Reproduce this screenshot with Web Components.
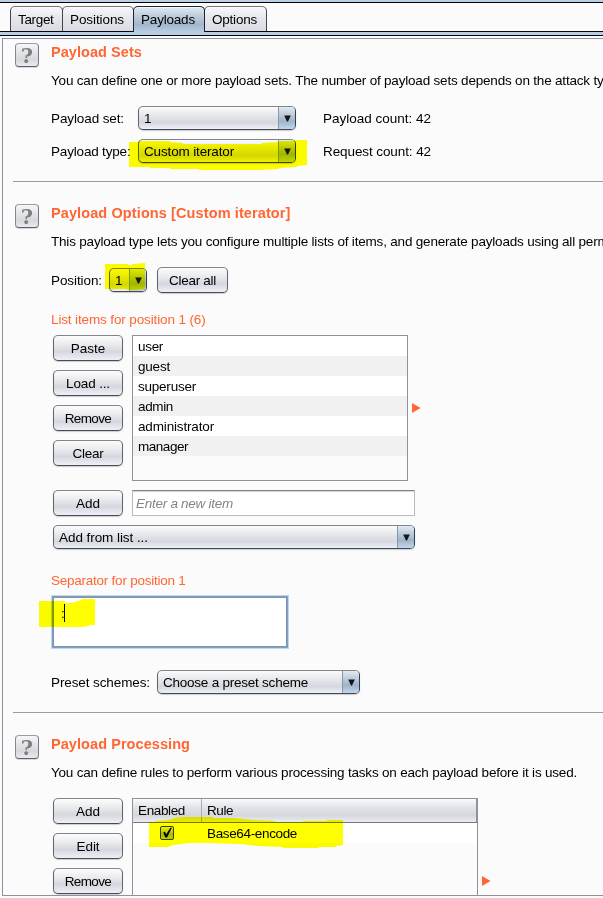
<!DOCTYPE html>
<html lang="en">
<head>
<meta charset="utf-8">
<title>Payloads</title>
<style>
html, body { margin: 0; height: 898px; overflow: hidden; background: #fbfbfb; }
body { font: 13.5px/20px "Liberation Sans", Arial, sans-serif; color: #000; }
</style>
</head>
<body>
<payload-page></payload-page>
<script>
function define(name, html, setup) {
  const template = document.createElement('template');
  template.innerHTML = html;
  customElements.define(name, class extends HTMLElement {
    connectedCallback() {
      if (this.shadowRoot) return;
      this.attachShadow({ mode: 'open' }).append(template.content.cloneNode(true));
      if (setup) setup(this, this.shadowRoot);
    }
  });
}

/* One line of text; w is the tracked width of the line in pixels. */
define('ui-text', `<style>
:host { display: inline-block; white-space: pre; line-height: 20px; flex: none; }
:host([title-text]) { font-size: 14.5px; font-weight: bold; color: #ff6633; display: block; }
:host([sub]) { color: #ff6633; display: block; }
:host([line]) { display: block; }
span { display: inline-block; }
</style><span><slot></slot></span>`, (host, root) => {
  const w = +host.getAttribute('w');
  if (!w) return;
  const span = root.querySelector('span');
  const spacing = (w - span.getBoundingClientRect().width) / host.textContent.length;
  span.style.letterSpacing = spacing.toFixed(3) + 'px';
});

define('ui-tab', `<style>
:host { display: flex; box-sizing: border-box; height: 25px; padding: 3px 0 0 7px; margin-right: -1px;
  border: 1px solid #43464e; border-top-color: #74777e; border-bottom: 0; border-radius: 5px 5px 0 0;
  background: linear-gradient(#f8f8fa, #e6e7ec 45%, #d9dbe2); box-shadow: inset 0 1px #ffffffa0; }
:host([active]) { height: 26px; z-index: 1; border-color: #17263c; background: linear-gradient(#e3eaf1, #c3d1df 30%, #a2b7ca 70%, #b9cee2); }
</style><slot></slot>`);

define('tab-strip', `<style>
:host { display: flex; box-sizing: border-box; height: 36px; padding: 3px 0 0 10px; align-items: flex-start;
 background: linear-gradient(#bad0e4 2px, #000 2px 3px, #fbfbfb 3px 31px, #050510 31px 32px, #b8cee3 32px 35px, #050510 35px); }
::slotted(*) { margin-top: 3px; }
</style><slot></slot>`);

define('ui-button', `<style>
:host { display: flex; flex: none; box-sizing: border-box; width: 70px; height: 26px; padding-top: 2px; align-items: center; justify-content: center;
 border: 1px solid; border-color: #82858c #62656d #484b54; border-radius: 5px;
 background: linear-gradient(#fcfcfd, #eaebee 35%, #d5d7de 65%, #eef0f6); box-shadow: 0 1px 1px #9a9da680; }
</style><slot></slot>`);

define('ui-combo', `<style>
:host { display: flex; flex: none; box-sizing: border-box; height: 24px; overflow: hidden;
 border: 1px solid; border-color: #82858c #303f52 #444852 #62656d; border-radius: 5px;
 background: linear-gradient(#fbfbfd, #e8e9ed 35%, #d5d7de 70%, #eef0f7); box-shadow: 0 1px 1px #9a9da680; }
div { flex: 1; padding: 2px 0 0 5px; }
i { width: 16px; flex: none; border-left: 1px solid #8099ae; display: flex; align-items: center; justify-content: center;
 background: linear-gradient(#e0e9f1, #b8c8d7 40%, #9fb4c7 65%, #c0d7ec); }
</style><div><slot></slot></div><i><svg width="7" height="7" viewBox="0 0 7 7"><path d="M0.2 0.5H6.8L4 6.5H3Z" fill="#151515"/></svg></i>`);

define('help-button', `<style>
:host { display: flex; box-sizing: border-box; width: 24px; height: 24px; align-items: center; justify-content: center;
 border: 1px solid; border-color: #9a9ca1 #77797f #5e6168 #85878d; border-radius: 4px;
 background: linear-gradient(#f7f7f8, #e5e6e9 35%, #d6d8de 70%, #e9ebf0); box-shadow: 0 1px #b4b6bb80; }
b { font: bold 21px/22px "DejaVu Serif", serif; color: #7f7f7f; padding-top: 1px; }
</style><b>?</b>`);

define('ui-section', `<style>
:host { display: grid; grid-template-columns: 24px minmax(0, 1fr); column-gap: 12px; box-sizing: border-box; padding: 4px 0 0 12px; overflow: hidden; }
:host([ruled]) { background: linear-gradient(#999ca4, #999ca4) 10px 100% / 100% 1px no-repeat; }
.body { margin-top: -1px; }
</style><help-button></help-button><div class="body"><slot></slot></div>`);

define('item-list', `<style>
:host { display: block; flex: none; box-sizing: border-box; width: 276px; height: 146px; border: 1px solid #8e929e; }
::slotted(*) { display: block; height: 20px; padding: 1px 0 0 5px; box-sizing: border-box; background: #fff; }
::slotted(:nth-child(even)) { background: #f1f1f1; }
</style><slot></slot>`);

define('text-entry', `<style>
:host { display: block; flex: none; box-sizing: border-box; width: 283px; height: 26px; padding: 3px 0 0 3px; border: 1px solid #bbb;
 border-top: 1px solid #858585; background: #fff; box-shadow: inset 0 1px #d4d4d4; color: #858585; font-style: italic; }
</style><slot></slot>`);

define('text-area', `<style>
:host { display: flex; box-sizing: border-box; width: 234px; height: 50px; padding: 6px 0 0 7px; background: #fff; border: 1px solid #8a919f;
 box-shadow: 0 0 0 1px #73a4d1, 0 0 0 2px #bdd7ee; }
i { width: 1px; height: 18px; background: #000; }
</style><slot></slot><i></i>`);

define('more-arrow', `<style>:host { display: block; line-height: 0; }</style><svg width="9" height="10" viewBox="0 0 9 10"><path d="M0 0L8.5 5L0 10Z" fill="#ff6633"/></svg>`);

define('rule-table', `<style>
:host { display: block; flex: none; box-sizing: border-box; width: 346px; height: 97px; border: 1px solid #8e929e; border-bottom: 0; }
.row { display: grid; grid-template-columns: 69px 1fr; }
.head { height: 23px; border-bottom: 1px solid #737680; background: linear-gradient(#fafafb, #e3e4e9 35%, #d5d7dd 72%, #ecedf4); box-shadow: inset -1px 0 #8e929e; }
.head > * { padding: 2px 0 0 5px; }
.head > :first-child { border-right: 1px solid #aaacb4; }
.entry { height: 20px; background: #fff; }
.entry svg { display: block; margin: 3px 0 0 27px; }
.entry div:last-child { padding: 1px 0 0 5px; }
</style>
<div class="row head"><div><ui-text w="47">Enabled</ui-text></div><div><ui-text w="26">Rule</ui-text></div></div>
<div class="row entry"><div><svg width="15" height="15" viewBox="0 0 15 15"><defs><linearGradient id="g" x2="0" y2="1"><stop stop-color="#f4f6f8"/><stop offset=".6" stop-color="#a9bccd"/><stop offset="1" stop-color="#c0d3e5"/></linearGradient></defs><rect x=".5" y=".5" width="13" height="13" rx="1.5" fill="url(#g)" stroke="#34424f"/><path d="M3.2 6.3L5 5.8L6.2 8.6L10.3 1.8H11.9L7 11.5H5.4Z" fill="#000"/></svg></div><div><ui-text w="90">Base64-encode</ui-text></div></div>`);

/* Yellow marker strokes drawn over the controls. */
define('marker-layer', `<style>
:host { position: absolute; left: 0; top: 0; width: 603px; height: 898px; mix-blend-mode: multiply; pointer-events: none; }
svg { display: block; }
</style><svg width="603" height="898" fill="#ffff00">
<path d="M129 142H138V141H170V142L183 143V144H262V143L279 142V141H291L298 140H307V165L297 166V167L279 168V169L257 170H199V169H170V168H150V167H129Z"/>
<path d="M105 264H128V265H132V264L145 263V289L135 290H127V289H105Z"/>
<path d="M39 601H65V603H73V602H76V601H80V600L83 599H95V625H89V626L82 627H39Z"/>
<path d="M149 822H155V821L168 820L175 818L183 817H213V818H234L255 820L275 821V822H303V821H327V820H331V820H343V845L336 846V847H319V848H283V847L258 846L240 844L207 843H189L173 845L168 847H149Z"/>
</svg>`);

define('payload-page', `<style>
:host { display: block; position: relative; width: 603px; height: 898px; background: #fbfbfb; isolation: isolate; overflow: hidden; }
main { margin: 2px 0 0 2px; height: 858px; box-sizing: border-box; border: 1px solid #8e929e; border-right: 0; overflow: hidden; }
.row { display: flex; align-items: flex-start; }
.form { display: grid; grid-template-columns: 87px 185px 1fr; row-gap: 9px; align-items: start; margin-top: 15px; }
.form > ui-text { margin-top: 3px; }
.first { height: 143px; } .second { height: 531px; }
.col { display: flex; flex-direction: column; gap: 9px; }
.indent { margin-left: 2px; column-gap: 9px; }
.desc { margin-top: 9px; }
</style>
<tab-strip>
<ui-tab style="width:53px"><ui-text w="35.5">Target</ui-text></ui-tab>
<ui-tab style="width:72px"><ui-text w="54">Positions</ui-text></ui-tab>
<ui-tab active style="width:72px"><ui-text w="54">Payloads</ui-text></ui-tab>
<ui-tab style="width:63px"><ui-text w="45">Options</ui-text></ui-tab>
</tab-strip>
<main>
<ui-section ruled class="first">
 <ui-text title-text w="91">Payload Sets</ui-text>
 <ui-text line class="desc" w="552.5">You can define one or more payload sets. The number of payload sets depends on the attack ty</ui-text>
 <div class="form">
  <ui-text w="73">Payload set:</ui-text><ui-combo style="width:158px"><ui-text>1</ui-text></ui-combo><ui-text w="108">Payload count: 42</ui-text>
  <ui-text w="79.5">Payload type:</ui-text><ui-combo style="width:158px"><ui-text w="90">Custom iterator</ui-text></ui-combo><ui-text w="108">Request count: 42</ui-text>
 </div>
</ui-section>
<ui-section ruled class="second" style="padding-top:22px">
 <ui-text title-text w="239.5">Payload Options [Custom iterator]</ui-text>
 <ui-text line class="desc" w="557.5">This payload type lets you configure multiple lists of items, and generate payloads using all perm</ui-text>
 <div class="row" style="margin-top:15px">
  <ui-text w="51" style="margin:4px 7px 0 0">Position:</ui-text><ui-combo style="width:38px;margin-top:1px"><ui-text>1</ui-text></ui-combo>
  <ui-button style="width:71px;margin-left:10px"><ui-text w="47">Clear all</ui-text></ui-button>
 </div>
 <ui-text sub w="154.5" style="margin-top:17px">List items for position 1 (6)</ui-text>
 <div class="row indent" style="margin-top:5px">
  <div class="col"><ui-button><ui-text w="34.5">Paste</ui-text></ui-button><ui-button><ui-text w="44">Load ...</ui-text></ui-button><ui-button><ui-text w="46.5">Remove</ui-text></ui-button><ui-button><ui-text w="31">Clear</ui-text></ui-button></div>
  <item-list><ui-text w="25">user</ui-text><ui-text w="32">guest</ui-text><ui-text w="58">superuser</ui-text><ui-text w="35">admin</ui-text><ui-text w="76">administrator</ui-text><ui-text w="50">manager</ui-text></item-list>
  <more-arrow style="margin:68px 0 0 -5px"></more-arrow>
 </div>
 <div class="row indent" style="margin-top:9px"><ui-button><ui-text w="24">Add</ui-text></ui-button><text-entry><ui-text w="97">Enter a new item</ui-text></text-entry></div>
 <div class="row indent" style="margin-top:9px"><ui-combo style="width:362px"><ui-text w="89">Add from list ...</ui-text></ui-combo></div>
 <ui-text sub w="134.5" style="margin-top:22px">Separator for position 1</ui-text>
 <text-area style="margin:6px 0 0 2px"><ui-text w="3">:</ui-text></text-area>
 <div class="row" style="margin-top:23px"><ui-text w="99" style="margin:3px 7px 0 0">Preset schemes:</ui-text><ui-combo style="width:203px"><ui-text w="145">Choose a preset scheme</ui-text></ui-combo></div>
</ui-section>
<ui-section style="padding-top:22px">
 <ui-text title-text w="139">Payload Processing</ui-text>
 <ui-text line class="desc" w="526">You can define rules to perform various processing tasks on each payload before it is used.</ui-text>
 <div class="row indent" style="margin-top:15px">
  <div class="col"><ui-button><ui-text w="24">Add</ui-text></ui-button><ui-button><ui-text w="23">Edit</ui-text></ui-button><ui-button><ui-text w="46.5">Remove</ui-text></ui-button></div>
  <rule-table></rule-table>
  <more-arrow style="margin:78px 0 0 -5px"></more-arrow>
 </div>
</ui-section>
</main>
<marker-layer></marker-layer>`);
</script>
</body>
</html>
